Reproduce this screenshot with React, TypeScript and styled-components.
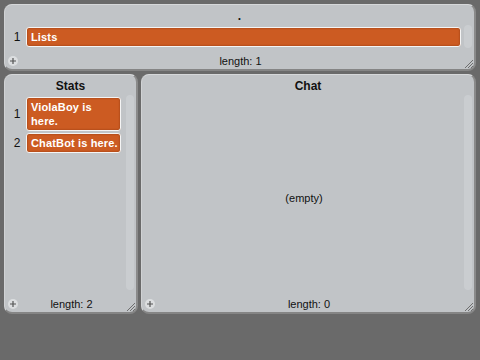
import styled, { createGlobalStyle } from "styled-components";

const GlobalStyle = createGlobalStyle`
    html, body {
        margin: 0;
        padding: 0;
        background: #6a6a6a;
    }

    body {
        font-family: "Liberation Sans", Arial, sans-serif;
        font-size: 12px;
        color: #111;
    }
`;

const Stage = styled.div`
    width: 480px;
    height: 360px;
    box-sizing: border-box;
    padding: 4px 4px 0 4px;
    display: grid;
    grid-template-rows: 67px 240px;
    row-gap: 3px;
`;

const BottomRow = styled.div`
    display: grid;
    grid-template-columns: 134px 1fr;
    column-gap: 3px;
`;

const Panel = styled.section`
    box-sizing: border-box;
    display: flex;
    flex-direction: column;
    background: #c1c4c7;
    border-radius: 8px;
    border-top: 1px solid #d6d8da;
    border-left: 1px solid #d0d2d4;
    border-right: 2px solid #8a8a8a;
    border-bottom: 2px solid #858585;
    min-height: 0;
`;

const Title = styled.h2`
    margin: 3px 0 0 0;
    font-size: 12px;
    line-height: 16px;
    font-weight: bold;
    text-align: center;
    color: #111;
`;

const Body = styled.div`
    flex: 1;
    display: flex;
    align-items: flex-start;
    padding: 1px 2px 0 5px;
    min-height: 0;
`;

const List = styled.ol`
    flex: 1;
    margin: 0;
    padding: 2px 0 0 0;
    list-style: none;
    display: flex;
    flex-direction: column;
    gap: 2px;
`;

const Row = styled.li`
    display: flex;
    align-items: center;
    gap: 2px;
`;

const Index = styled.span`
    width: 14px;
    text-align: center;
    font-size: 12px;
    color: #111;
`;

const Cell = styled.div<{ $width?: number }>`
    box-sizing: border-box;
    ${(p) => (p.$width ? `width: ${p.$width}px;` : "flex: 1;")}
    min-height: 20px;
    padding: 2px 0 2px 4px;
    background: #cc5b22;
    border: 1px solid #f4f4f4;
    border-radius: 3px;
    box-shadow: inset 0 0 2px rgba(90, 30, 0, 0.6);
    color: #fff;
    font-weight: bold;
    font-size: 11px;
    line-height: 14px;
    letter-spacing: 0.15px;
`;

const Empty = styled.div`
    flex: 1;
    align-self: stretch;
    display: flex;
    align-items: center;
    justify-content: center;
    padding-top: 4px;
    font-size: 11px;
    color: #111;
`;

const ScrollTrack = styled.div<{ $height: number }>`
    width: 8px;
    height: ${(p) => p.$height}px;
    margin-left: 3px;
    border-radius: 4px;
    background: #cacdd0;
`;

const Footer = styled.footer`
    display: grid;
    grid-template-columns: 1fr auto 1fr;
    align-items: center;
    height: 14px;
    margin-bottom: 1px;
    padding: 0 1px 0 3px;
`;

const AddButton = styled.span`
    justify-self: start;
    width: 10px;
    height: 10px;
    border-radius: 50%;
    background: #dcdee0;
    display: flex;
    align-items: center;
    justify-content: center;
`;

const Length = styled.span`
    font-size: 11px;
    color: #111;
`;

const Grip = styled.span`
    justify-self: end;
    align-self: end;
    width: 9px;
    height: 9px;
    display: flex;
`;

const PlusIcon = () => (
    <svg width="8" height="8" viewBox="0 0 8 8">
        <path d="M4 1v6M1 4h6" stroke="#555" strokeWidth="1.2" />
    </svg>
);

const GripIcon = () => (
    <svg width="9" height="9" viewBox="0 0 9 9">
        <path d="M1 9L9 1M4 9L9 4M7 9L9 7" stroke="#6e6e6e" strokeWidth="1" />
    </svg>
);

interface ListWatcherProps {
    title: string;
    items: string[];
    cellWidth?: number;
    trackHeight: number;
}

const ListWatcher = ({ title, items, cellWidth, trackHeight }: ListWatcherProps) => {
    return (
        <Panel>
            <Title>{title}</Title>
            <Body>
                {items.length > 0 ? (
                    <List>
                        {items.map((item, i) => (
                            <Row key={i}>
                                <Index>{i + 1}</Index>
                                <Cell $width={cellWidth}>{item}</Cell>
                            </Row>
                        ))}
                    </List>
                ) : (
                    <Empty>(empty)</Empty>
                )}
                <ScrollTrack $height={trackHeight} />
            </Body>
            <Footer>
                <AddButton>
                    <PlusIcon />
                </AddButton>
                <Length>length: {items.length}</Length>
                <Grip>
                    <GripIcon />
                </Grip>
            </Footer>
        </Panel>
    );
};

const App = () => {
    return (
        <>
            <GlobalStyle />
            <Stage>
                <ListWatcher title="." items={["Lists"]} trackHeight={23} />
                <BottomRow>
                    <ListWatcher
                        title="Stats"
                        items={["ViolaBoy is here.", "ChatBot is here."]}
                        cellWidth={95}
                        trackHeight={195}
                    />
                    <ListWatcher title="Chat" items={[]} trackHeight={195} />
                </BottomRow>
            </Stage>
        </>
    );
};

export default App;
